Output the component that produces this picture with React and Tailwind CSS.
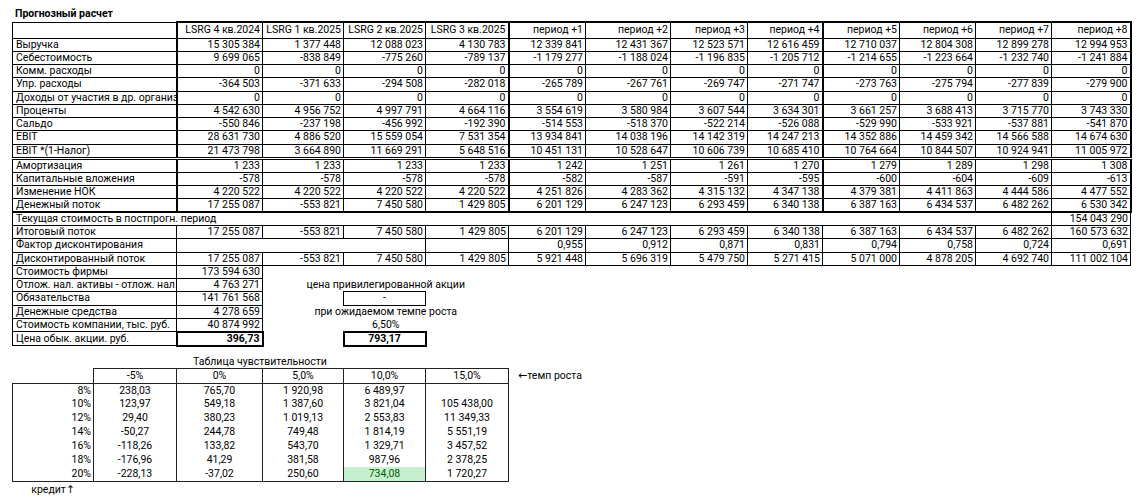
import clsx from 'clsx';

const cols = ['w-[81px]', 'w-[83px]', 'w-[86px]', 'w-[81px]', 'w-[82px]', 'w-[83px]', 'w-[77px]', 'w-[85px]', 'w-[77px]', 'w-[75px]', 'w-[77px]', 'w-[76px]', 'w-[76px]', 'w-[79px]'];

const head = ['LSRG 4 кв.2024', 'LSRG 1 кв.2025', 'LSRG 2 кв.2025', 'LSRG 3 кв.2025', 'период +1', 'период +2', 'период +3', 'период +4', 'период +5', 'период +6', 'период +7', 'период +8'];

const zeros = Array(12).fill('0');

const forecast = [
  ['Выручка', ['15 305 384', '1 377 448', '12 088 023', '4 130 783', '12 339 841', '12 431 367', '12 523 571', '12 616 459', '12 710 037', '12 804 308', '12 899 278', '12 994 953']],
  ['Себестоимость', ['9 699 065', '-838 849', '-775 260', '-789 137', '-1 179 277', '-1 188 024', '-1 196 835', '-1 205 712', '-1 214 655', '-1 223 664', '-1 232 740', '-1 241 884']],
  ['Комм. расходы', zeros],
  ['Упр. расходы', ['-364 503', '-371 633', '-294 508', '-282 018', '-265 789', '-267 761', '-269 747', '-271 747', '-273 763', '-275 794', '-277 839', '-279 900']],
  ['Доходы от участия в др. организациях', zeros],
  ['Проценты', ['4 542 630', '4 956 752', '4 997 791', '4 664 116', '3 554 619', '3 580 984', '3 607 544', '3 634 301', '3 661 257', '3 688 413', '3 715 770', '3 743 330']],
  ['Сальдо', ['-550 846', '-237 198', '-456 992', '-192 390', '-514 553', '-518 370', '-522 214', '-526 088', '-529 990', '-533 921', '-537 881', '-541 870']],
  ['EBIT', ['28 631 730', '4 886 520', '15 559 054', '7 531 354', '13 934 841', '14 038 196', '14 142 319', '14 247 213', '14 352 886', '14 459 342', '14 566 588', '14 674 630']],
  ['EBIT *(1-Налог)', ['21 473 798', '3 664 890', '11 669 291', '5 648 516', '10 451 131', '10 528 647', '10 606 739', '10 685 410', '10 764 664', '10 844 507', '10 924 941', '11 005 972']],
  ['Амортизация', ['1 233', '1 233', '1 233', '1 233', '1 242', '1 251', '1 261', '1 270', '1 279', '1 289', '1 298', '1 308']],
  ['Капитальные вложения', ['-578', '-578', '-578', '-578', '-582', '-587', '-591', '-595', '-600', '-604', '-609', '-613']],
  ['Изменение НОК', ['4 220 522', '4 220 522', '4 220 522', '4 220 522', '4 251 826', '4 283 362', '4 315 132', '4 347 138', '4 379 381', '4 411 863', '4 444 586', '4 477 552']],
  ['Денежный поток', ['17 255 087', '-553 821', '7 450 580', '1 429 805', '6 201 129', '6 247 123', '6 293 459', '6 340 138', '6 387 163', '6 434 537', '6 482 262', '6 530 342']],
];

const total = ['17 255 087', '-553 821', '7 450 580', '1 429 805', '6 201 129', '6 247 123', '6 293 459', '6 340 138', '6 387 163', '6 434 537', '6 482 262', '160 573 632'];
const factor = ['0,955', '0,912', '0,871', '0,831', '0,794', '0,758', '0,724', '0,691'];
const discounted = ['17 255 087', '-553 821', '7 450 580', '1 429 805', '5 921 448', '5 696 319', '5 479 750', '5 271 415', '5 071 000', '4 878 205', '4 692 740', '111 002 104'];

const rates = ['-5%', '0%', '5,0%', '10,0%', '15,0%'];
const sens = [
  ['8%', ['238,03', '765,70', '1 920,98', '6 489,97', '']],
  ['10%', ['123,97', '549,18', '1 387,60', '3 821,04', '105 438,00']],
  ['12%', ['29,40', '380,23', '1 019,13', '2 553,83', '11 349,33']],
  ['14%', ['-50,27', '244,78', '749,48', '1 814,19', '5 551,19']],
  ['16%', ['-118,26', '133,82', '543,70', '1 329,71', '3 457,52']],
  ['18%', ['-176,96', '41,29', '381,58', '987,96', '2 378,25']],
  ['20%', ['-228,13', '-37,02', '250,60', '734,08', '1 720,27']],
];

const thickRight = (j) => (j === 3 || j === 7 || j === 11 ? 'border-r-2' : '');

function Label({ children, className }) {
  return (
    <td colSpan={2} className={clsx('border border-black pl-[3px] overflow-hidden', className)}>
      {children}
    </td>
  );
}

function Num({ children, className, ...rest }) {
  return (
    <td {...rest} className={clsx('border border-black text-right pr-[2px] overflow-hidden', className)}>
      {children}
    </td>
  );
}

export default function App() {
  return (
    <div className="min-h-screen bg-white text-black font-['Roboto',sans-serif] text-[10.5px] leading-[12px] whitespace-nowrap">
      <div className="pl-[15px] pt-[8px] font-bold h-[21px]">Прогнозный расчет</div>

      <table className="ml-[12px] table-fixed border-collapse w-[1118px]">
        <colgroup>
          {cols.map((c, i) => <col key={i} className={c} />)}
        </colgroup>
        <tbody>
          {/* шапка */}
          <tr className="h-[16px]">
            <Label />
            {head.map((h, j) => (
              <Num key={j} className={clsx('border-t-2', j === 0 && 'border-l-2', thickRight(j))}>{h}</Num>
            ))}
          </tr>

          {forecast.map(([name, vals], i) => {
            const last = i === forecast.length - 1;
            const dbl = i === 8;
            return (
              <tr key={name} className="h-[13.25px]">
                <Label className={clsx(last && 'border-b-2', dbl && 'border-b-[3px] border-double')}>{name}</Label>
                {vals.map((v, j) => (
                  <Num key={j} className={clsx(j === 0 && 'border-l-2', thickRight(j), last && 'border-b-2', dbl && 'border-b-[3px] border-double')}>{v}</Num>
                ))}
              </tr>
            );
          })}

          <tr className="h-[13.25px]">
            <td colSpan={13} className="border border-black pl-[3px]">Текущая стоимость в постпрогн. период</td>
            <Num>154 043 290</Num>
          </tr>
          <tr className="h-[13.25px]">
            <Label>Итоговый поток</Label>
            {total.map((v, j) => <Num key={j}>{v}</Num>)}
          </tr>
          <tr className="h-[13.25px]">
            <Label>Фактор дисконтирования</Label>
            <Num colSpan={3} />
            <Num />
            {factor.map((v, j) => <Num key={j}>{v}</Num>)}
          </tr>
          <tr className="h-[13.25px]">
            <Label>Дисконтированный поток</Label>
            {discounted.map((v, j) => <Num key={j}>{v}</Num>)}
          </tr>

          {/* оценка */}
          <tr className="h-[13.25px]">
            <Label>Стоимость фирмы</Label>
            <Num>173 594 630</Num>
          </tr>
          <tr className="h-[13.25px]">
            <Label>Отлож. нал. активы - отлож. нал.</Label>
            <Num>4 763 271</Num>
            <td colSpan={3} className="text-center">цена привилегированной акции</td>
          </tr>
          <tr className="h-[13.25px]">
            <Label>Обязательства</Label>
            <Num>141 761 568</Num>
            <td />
            <td className="border border-black text-center">-</td>
            <td />
          </tr>
          <tr className="h-[13.25px]">
            <Label>Денежные средства</Label>
            <Num>4 278 659</Num>
            <td colSpan={3} className="text-center">при ожидаемом темпе роста</td>
          </tr>
          <tr className="h-[13.25px]">
            <Label>Стоимость компании, тыс. руб.</Label>
            <Num>40 874 992</Num>
            <td colSpan={3} className="text-center">6,50%</td>
          </tr>
          <tr className="h-[13.25px]">
            <Label>Цена обык. акции. руб.</Label>
            <Num className="border-2 font-bold">396,73</Num>
            <td />
            <td className="border-2 border-black text-center font-bold">793,17</td>
            <td />
          </tr>
        </tbody>
      </table>

      {/* таблица чувствительности */}
      <table className="ml-[12px] mt-[9px] table-fixed border-collapse w-[596px]">
        <colgroup>
          {cols.slice(0, 6).map((c, i) => <col key={i} className={c} />)}
          <col className="w-[100px]" />
        </colgroup>
        <tbody>
          <tr className="h-[12px]">
            <td />
            <td />
            <td colSpan={2} className="text-center">Таблица чувствительности</td>
          </tr>
          <tr className="h-[15px]">
            <td />
            {rates.map((r) => (
              <td key={r} className="border border-[#222] text-center">{r}</td>
            ))}
            <td className="pl-[9px]">
              <span className="font-['DejaVu_Sans',sans-serif] text-[11px] leading-[12px]">←</span>темп роста
            </td>
          </tr>
          {sens.map(([k, vals], i) => {
            const last = i === sens.length - 1;
            return (
              <tr key={k} className="h-[14px]">
                <td className={clsx('border-x border-[#222] text-right pr-[2px]', i === 0 && 'border-t', last && 'border-b')}>{k}</td>
                {vals.map((v, j) => (
                  <td
                    key={j}
                    className={clsx(
                      'border-x border-[#222] text-center',
                      last && 'border-b',
                      last && j === 3 && 'bg-[#c6efce] text-[#006100]'
                    )}
                  >
                    {v}
                  </td>
                ))}
              </tr>
            );
          })}
          <tr className="h-[16px]">
            <td className="text-center">
              кредит<span className="font-['DejaVu_Sans',sans-serif] leading-[12px]">↑</span>
            </td>
          </tr>
        </tbody>
      </table>
    </div>
  );
}
